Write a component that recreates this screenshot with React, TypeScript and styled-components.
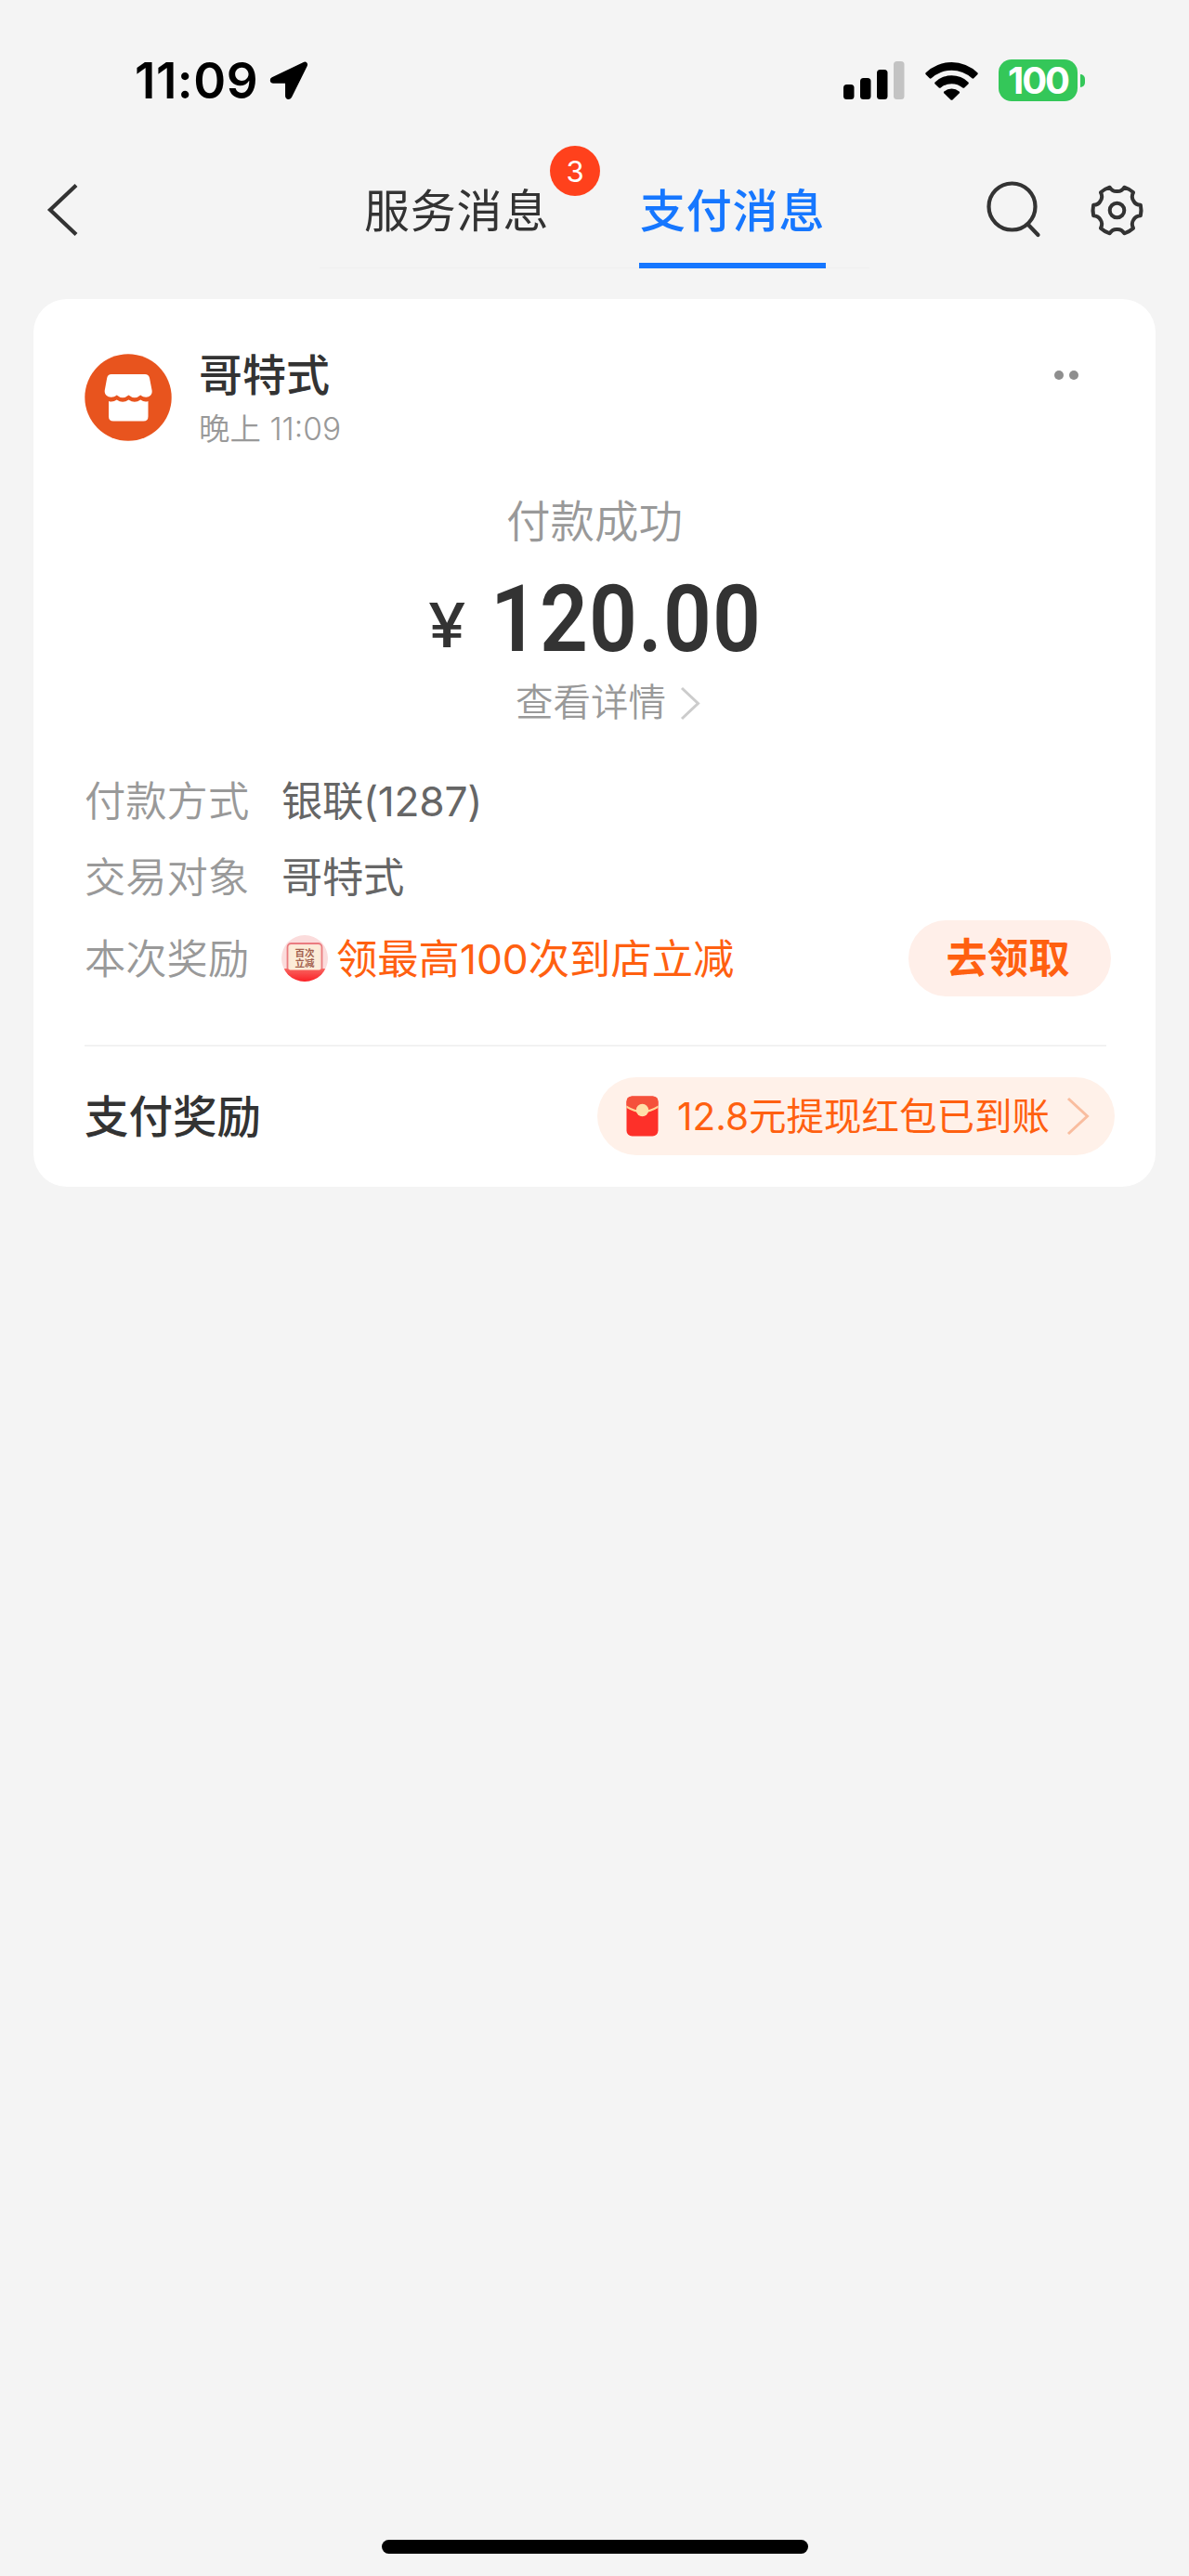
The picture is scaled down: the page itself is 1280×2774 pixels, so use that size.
import React from 'react';
import styled, { createGlobalStyle } from 'styled-components';

const GlobalStyle = createGlobalStyle`
  *, *::before, *::after { box-sizing: border-box; }
  body {
    margin: 0;
    background: #f4f4f4;
    font-family: Inter, "Noto Sans CJK SC", sans-serif;
    color: #333;
  }
  svg { display: block; flex: none; overflow: visible; }
`;

const Page = styled.div`
  width: 1280px;
  height: 2774px;
  display: flex;
  flex-direction: column;
  background: #f4f4f4;
  overflow: hidden;
`;

const StatusBar = styled.div`
  height: 173px;
  padding: 0 112px 0 145px;
  display: flex;
  align-items: center;
  justify-content: space-between;
`;

const StatusGroup = styled.div<{ $gap: number }>`
  display: flex;
  align-items: center;
  gap: ${(p) => p.$gap}px;
`;

const Clock = styled.span`
  width: 133px;
  font-size: 53px;
  line-height: 60px;
  font-weight: 600;
  letter-spacing: 0.5px;
  color: #000;
  white-space: nowrap;
`;

const Battery = styled.div`
  display: flex;
  align-items: center;
  gap: 3px;
`;

const BatteryBody = styled.div`
  width: 85px;
  height: 45px;
  border-radius: 14px;
  background: #34c759;
  color: #fff;
  font-size: 40px;
  line-height: 45px;
  font-weight: 700;
  letter-spacing: -2px;
  text-align: center;
`;

const BatteryTip = styled.div`
  width: 5px;
  height: 14px;
  border-radius: 0 6px 6px 0;
  background: #34c759;
`;

const NavBar = styled.div`
  height: 116px;
  display: flex;
  align-items: flex-start;
  padding: 22px 50px 0 51px;
`;

const BackIcon = styled.svg`
  margin-top: 3px;
`;

const Tabs = styled.div`
  display: flex;
  margin-left: 260px;
  padding: 0 47px 0 48px;
  gap: 97px;
  box-shadow: inset 0 -1px #f0f0f0;
`;

const Tab = styled.div<{ $active?: boolean }>`
  position: relative;
  width: ${(p) => (p.$active ? '201px' : '199px')};
  height: 94px;
  padding-left: ${(p) => (p.$active ? '1px' : '0')};
  border-bottom: 6px solid ${(p) => (p.$active ? '#1677ff' : 'transparent')};
  color: ${(p) => (p.$active ? '#1677ff' : '#333')};
  font-size: 49px;
  line-height: 66px;
  font-weight: ${(p) => (p.$active ? 500 : 400)};
  letter-spacing: 0.8px;
  white-space: nowrap;
`;

const Badge = styled.span`
  position: absolute;
  left: 200px;
  top: -38px;
  width: 54px;
  height: 54px;
  border-radius: 50%;
  background: #ff411c;
  color: #fff;
  font-size: 31px;
  line-height: 56px;
  font-weight: 400;
  letter-spacing: 0;
  text-align: center;
`;

const NavActions = styled.div`
  display: flex;
  align-items: center;
  gap: 53px;
  margin-left: auto;
  padding-top: 1px;
`;

const Card = styled.section`
  margin: 33px 36px 0;
  height: 956px;
  border-radius: 36px;
  background: #fff;
  padding: 59px 44px 0 55px;
  display: flex;
  flex-direction: column;
`;

const Merchant = styled.header`
  display: flex;
  height: 94px;
`;

const MerchantText = styled.div`
  margin-left: 29px;
  display: flex;
  flex-direction: column;
`;

const MerchantName = styled.div`
  margin-top: -7px;
  font-size: 47px;
  line-height: 60px;
  font-weight: 500;
`;

const MerchantTime = styled.div`
  font-size: 33.5px;
  line-height: 56px;
  font-weight: 350;
  color: #999;
  white-space: nowrap;
`;

const More = styled.div`
  display: flex;
  gap: 6px;
  margin: 18px 39px 0 auto;
`;

const Dot = styled.i`
  width: 10px;
  height: 10px;
  border-radius: 50%;
  background: #8e8e8e;
`;

const Summary = styled.div`
  display: flex;
  flex-direction: column;
  align-items: center;
  margin: 57px 11px 0 0;
`;

const SummaryTitle = styled.div`
  font-size: 47.5px;
  line-height: 60px;
  font-weight: 350;
  color: #999;
`;

const Amount = styled.div`
  margin-top: 25px;
  width: 358px;
  height: 100px;
  display: flex;
  align-items: baseline;
  line-height: 100px;
  white-space: nowrap;
`;

const Currency = styled.span`
  width: 67px;
  flex: none;
  font-size: 66px;
  line-height: 92px;
  font-weight: 550;
  transform: translateY(-4px) scaleX(1.1);
  transform-origin: left center;
`;

const Digits = styled.span`
  font-family: Roboto, sans-serif;
  font-size: 101px;
  font-weight: 600;
  letter-spacing: 1.2px;
  transform: scaleX(0.9);
  transform-origin: left center;
`;

const DetailLink = styled.div`
  margin: 15px 0 0 28px;
  display: flex;
  align-items: center;
  gap: 16px;
  font-size: 40.5px;
  line-height: 50px;
  font-weight: 350;
  color: #999;
`;

const Row = styled.div<{ $height: number; $top: number }>`
  display: flex;
  align-items: center;
  height: ${(p) => p.$height}px;
  margin-top: ${(p) => p.$top}px;
  font-size: 44.3px;
  line-height: 50px;
  white-space: nowrap;
`;

const Label = styled.span`
  width: 212px;
  padding-top: 1px;
  font-weight: 350;
  color: #999;
`;

const Value = styled.span`
  padding-top: 1px;
  color: #666;
  font-weight: 400;
  letter-spacing: -0.3px;
`;

const Reward = styled.span`
  margin-left: 9px;
  padding-top: 1px;
  color: #ff6010;
  font-weight: 400;
`;

const ClaimButton = styled.button`
  margin: 0 4px 0 auto;
  width: 218px;
  height: 82px;
  border: 0;
  padding: 0 4px 0 0;
  border-radius: 41px;
  background: #ffefe9;
  color: #ff6010;
  font: inherit;
  font-weight: 700;
`;

const Divider = styled.div`
  height: 2px;
  margin: 52px 9px 33px 0;
  background: #f2f2f2;
`;

const Footer = styled.footer`
  display: flex;
  align-items: center;
  justify-content: space-between;
`;

const FooterTitle = styled.div`
  padding-top: 2px;
  font-size: 47.5px;
  line-height: 60px;
  font-weight: 500;
`;

const RewardPill = styled.div`
  width: 557px;
  height: 84px;
  border-radius: 42px;
  background: #fff1e9;
  display: flex;
  align-items: center;
  padding: 0 28px 0 31px;
  color: #ff6010;
  font-size: 40.5px;
  line-height: 50px;
  font-weight: 400;
  white-space: nowrap;
`;

const PillText = styled.span`
  margin-left: 20px;
  margin-right: auto;
  padding-top: 2px;
`;

const HomeIndicator = styled.div`
  width: 459px;
  height: 15px;
  border-radius: 8px;
  background: #000;
  margin: auto auto 24px;
`;

const LocationIcon = () => (
  <svg width="42" height="41" viewBox="0 0 42 41">
    <path
      d="M37.500 2.500 3.500 18.800c-1.600.8-1.200 3.200.7 3.200H18.800V37c0 2.500 2.800 3 3.800.8L39.200 4.300c.6-1.400-.5-2.400-1.700-1.800Z"
      fill="#000"
      stroke="#000"
      strokeWidth="3.500"
      strokeLinejoin="round"
    />
  </svg>
);

const SignalIcon = () => (
  <svg width="66" height="41" viewBox="0 0 66 41">
    <rect x="0" y="25" width="11.5" height="16" rx="3.5" />
    <rect x="18" y="18" width="11.5" height="23" rx="3.5" />
    <rect x="36" y="9" width="11.5" height="32" rx="3.5" />
    <rect x="54" y="0" width="11.5" height="41" rx="3.5" fill="#c3c3c3" />
  </svg>
);

const WifiIcon = () => (
  <svg width="57" height="42" viewBox="0 0 57 42">
    <path d="M.7 12.2A40 40 0 0 1 56.3 12.2Q57.2 13.3 56.3 14.3L52.3 18.3Q51.4 19 50.4 18.2A32.5 32.5 0 0 0 6.6 18.2Q5.6 19 4.7 18.3L.7 14.3Q-.2 13.3.7 12.2Z" />
    <path d="M10.6 22.4A26 26 0 0 1 46.4 22.4Q47.3 23.4 46.4 24.4L42.2 28.4Q41.3 29.1 40.3 28.4A18.5 18.5 0 0 0 16.7 28.4Q15.7 29.1 14.8 28.4L10.6 24.4Q9.7 23.4 10.6 22.4Z" />
    <path d="M20.4 32.4A12.5 12.5 0 0 1 36.6 32.4Q37.6 33.5 36.6 34.5L29.5 41.4Q28.5 42.2 27.5 41.4L20.4 34.5Q19.4 33.5 20.4 32.4Z" />
  </svg>
);

const SearchIcon = () => (
  <svg width="60" height="60" viewBox="0 0 60 60" fill="none" stroke="#333" strokeWidth="4.2" strokeLinecap="round">
    <circle cx="27.5" cy="26.5" r="25" />
    <path d="M44.5 45.5 55.5 57" />
  </svg>
);

const gearPath = Array.from({ length: 6 }, (_, i) => {
  const at = (radius: number, deg: number) => {
    const a = ((i * 60 + deg) * Math.PI) / 180;
    return `${(radius * Math.cos(a)).toFixed(2)} ${(radius * Math.sin(a)).toFixed(2)}`;
  };
  return `${i ? 'L' : 'M'}${at(26, -12.5)}Q${at(26.6, 0)} ${at(26, 12.5)}C${at(22, 15)} ${at(20.5, 22)} ${at(20.5, 30)}C${at(20.5, 38)} ${at(22, 45)} ${at(26, 47.5)}`;
}).join('') + 'Z';

const GearIcon = () => (
  <svg width="55" height="55" viewBox="-27.5 -27.5 55 55" fill="none" stroke="#333" strokeWidth="4" strokeLinejoin="round">
    <path d={gearPath} />
    <circle r="7.8" />
  </svg>
);

const ShopIcon = () => (
  <svg width="94" height="94" viewBox="0 0 94 94">
    <circle cx="47" cy="47" r="46.7" fill="#e8541e" />
    <path
      d="M29 22H65Q69 22 70 26L72.6 39.5C73.5 46 66 49 60.3 44.5Q54 50 47.5 44.5Q41 50 34.7 44.5C29 49 21 46 21.7 39.5L24.2 26Q25 22 29 22Z"
      fill="#fff"
    />
    <path
      d="M26 51Q30.500 52.500 34.700 49.500Q41 54 47.500 49.500Q54 54 60.300 49.500Q64.500 52.500 68.500 51V67.500Q68.500 72.500 63.500 72.500H31Q26 72.500 26 67.500Z"
      fill="#fff"
    />
  </svg>
);

const CouponIcon = () => (
  <svg width="50" height="50" viewBox="0 0 50 50">
    <defs>
      <clipPath id="coupon-disc">
        <circle cx="25" cy="25" r="25" />
      </clipPath>
      <linearGradient id="coupon-red" x1="0" y1="0" x2="0" y2="1">
        <stop offset="0" stopColor="#f86560" />
        <stop offset="1" stopColor="#fb2026" />
      </linearGradient>
    </defs>
    <g clipPath="url(#coupon-disc)">
      <rect width="50" height="50" fill="#fbdcdc" />
      <rect x="6.500" y="9" width="37" height="34" rx="4" fill="#fbe6d8" stroke="#ea7c80" strokeWidth="1.800" />
      <rect x="9.500" y="11.500" width="31" height="28" rx="2" fill="#fcecd8" />
      <path d="M0 36.500Q8 35 9 37.500H41Q42 35 50 36.500V50H0Z" fill="url(#coupon-red)" />
    </g>
    <g fill="#a3614f" fontSize="10.500" fontWeight="700" textAnchor="middle">
      <text x="25" y="22.500">百次</text>
      <text x="25" y="33.500">立减</text>
    </g>
  </svg>
);

const EnvelopeIcon = () => (
  <svg width="35" height="44" viewBox="0 0 35 44">
    <rect x=".5" y=".5" width="34" height="43" rx="6" fill="#fd3029" />
    <path d="M.5 10.500V6.500Q.5.5 6.500.5H28.500Q34.500.5 34.500 6.500V10.500Q17.500 20 .5 10.500Z" fill="#f5513b" />
    <path d="M.5 10.500Q17.500 21 34.500 10.500V13Q17.500 23.500.5 13Z" fill="#ffd596" />
    <circle cx="17.500" cy="15.500" r="6.700" fill="#ffdfa8" />
  </svg>
);

const Chevron = ({ width, height, color, stroke }: { width: number; height: number; color: string; stroke: number }) => (
  <svg width={width} height={height} viewBox={`0 0 ${width} ${height}`} fill="none" stroke={color} strokeWidth={stroke}>
    <path d={`M1 1 ${width - 1.5} ${height / 2} 1 ${height - 1}`} />
  </svg>
);

export default function App() {
  return (
    <Page>
      <GlobalStyle />
      <StatusBar>
        <StatusGroup $gap={12}>
          <Clock>11:09</Clock>
          <LocationIcon />
        </StatusGroup>
        <StatusGroup $gap={22}>
          <SignalIcon />
          <WifiIcon />
          <Battery>
            <BatteryBody>100</BatteryBody>
            <BatteryTip />
          </Battery>
        </StatusGroup>
      </StatusBar>

      <NavBar>
        <BackIcon width="33" height="56" viewBox="0 0 33 56" fill="none" stroke="#333" strokeWidth="4.2">
          <path d="M31 1.500 3 28 31 54.500" />
        </BackIcon>
        <Tabs>
          <Tab>
            服务消息
            <Badge>3</Badge>
          </Tab>
          <Tab $active>支付消息</Tab>
        </Tabs>
        <NavActions>
          <SearchIcon />
          <GearIcon />
        </NavActions>
      </NavBar>

      <Card>
        <Merchant>
          <ShopIcon />
          <MerchantText>
            <MerchantName>哥特式</MerchantName>
            <MerchantTime>晚上 11:09</MerchantTime>
          </MerchantText>
          <More>
            <Dot />
            <Dot />
          </More>
        </Merchant>

        <Summary>
          <SummaryTitle>付款成功</SummaryTitle>
          <Amount>
            <Currency>¥</Currency>
            <Digits>120.00</Digits>
          </Amount>
          <DetailLink>
            查看详情
            <Chevron width={20} height={35} color="#ccc" stroke={3} />
          </DetailLink>
        </Summary>

        <Row $height={50} $top={55}>
          <Label>付款方式</Label>
          <Value>银联(1287)</Value>
        </Row>
        <Row $height={50} $top={32}>
          <Label>交易对象</Label>
          <Value>哥特式</Value>
        </Row>
        <Row $height={82} $top={22}>
          <Label>本次奖励</Label>
          <CouponIcon />
          <Reward>领最高100次到店立减</Reward>
          <ClaimButton>去领取</ClaimButton>
        </Row>

        <Divider />

        <Footer>
          <FooterTitle>支付奖励</FooterTitle>
          <RewardPill>
            <EnvelopeIcon />
            <PillText>12.8元提现红包已到账</PillText>
            <Chevron width={23} height={40} color="#f9bd9f" stroke={3} />
          </RewardPill>
        </Footer>
      </Card>

      <HomeIndicator />
    </Page>
  );
}
